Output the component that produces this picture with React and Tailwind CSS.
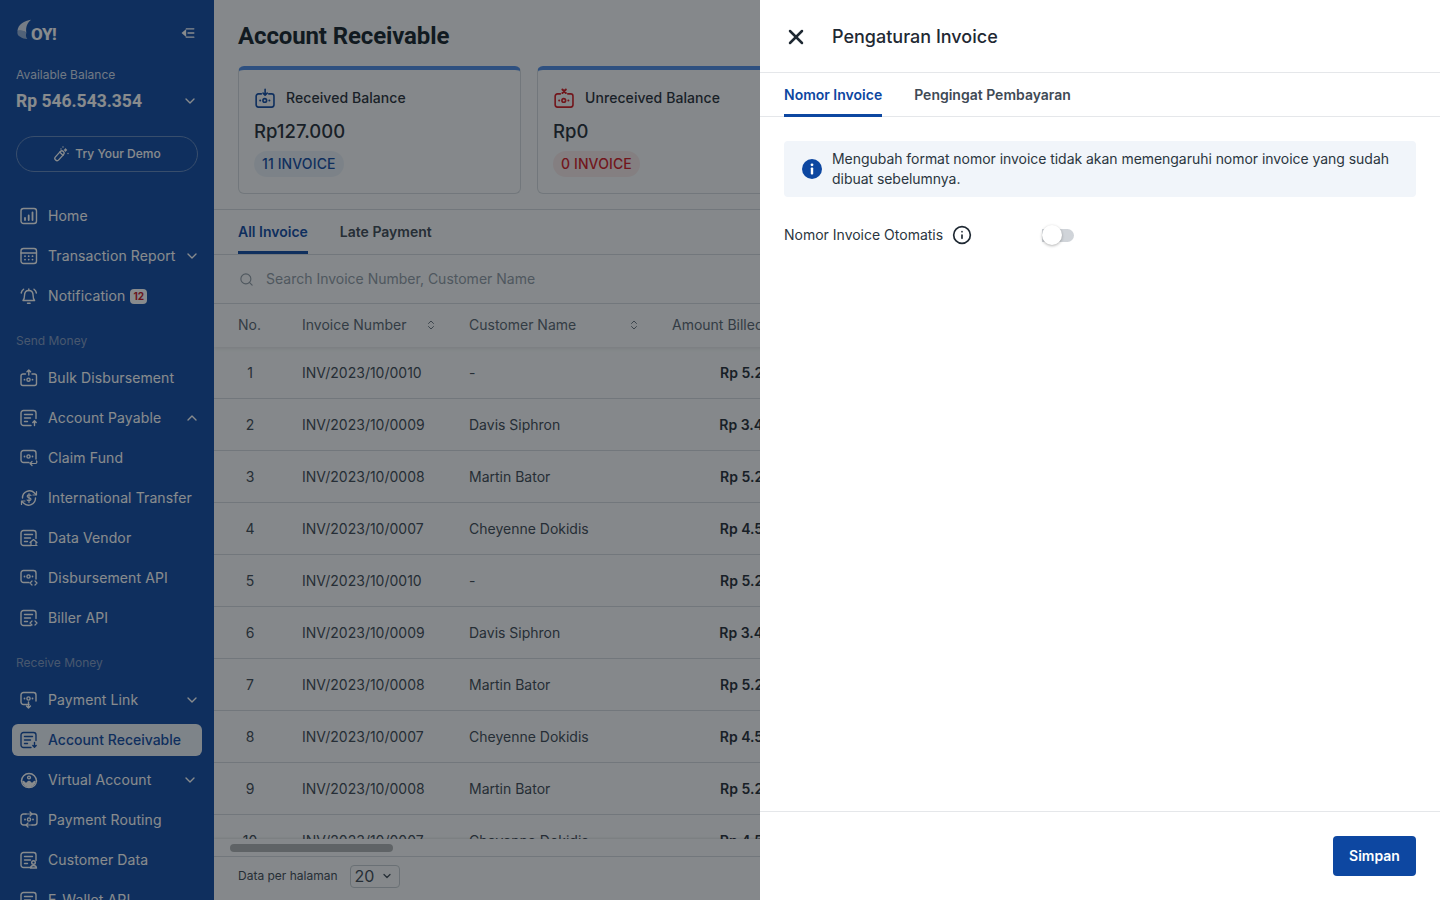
import { ChevronDown, ChevronUp, ChevronsUpDown, Info, Search, X } from 'lucide-react'

const font = { fontFamily: 'Inter, "Noto Sans", sans-serif' }

function Svg({ children, className = 'h-5 w-5 shrink-0' }) {
  return (
    <svg viewBox="0 0 20 20" fill="none" stroke="currentColor" strokeWidth="1.4" strokeLinecap="round" strokeLinejoin="round" className={className}>
      {children}
    </svg>
  )
}

function Dots() {
  return (
    <>
      <circle cx="8.5" cy="8.5" r="1.6" />
      <path d="M4.5 8.5h.01M12.5 8.5h.01" strokeWidth="1.8" />
    </>
  )
}

const HomeIcon = () => (
  <Svg>
    <rect x="1" y="2.5" width="15.5" height="15" rx="2.5" />
    <path d="M5 14v-2M8.7 14V9.5M12.5 14V6.5" strokeWidth="1.8" />
  </Svg>
)
const ReportIcon = () => (
  <Svg>
    <rect x="1" y="2.5" width="15.5" height="15" rx="2.5" />
    <path d="M1 7h15.5" />
    <path d="M5 10.2h.01M8.7 10.2h.01M12.5 10.2h.01M5 13.6h.01M8.7 13.6h.01M12.5 13.6h.01" strokeWidth="1.8" />
  </Svg>
)
const BellIcon = () => (
  <Svg>
    <path d="M3 14.500c1-1 1.500-2.500 1.500-5 0-3 1.700-5 4.300-5s4.300 2 4.300 5c0 2.500.5 4 1.500 5z" />
    <path d="M7.500 17.300h2.600M8.800 4.500V3M1.200 7C1.500 5.500 2.300 4.300 3.600 3.300M16.400 7c-.3-1.500-1.100-2.700-2.400-3.700" />
  </Svg>
)
const BoxIcon = ({ top, className }) => (
  <Svg className={className}>
    <path d="M5.500 6H3a2 2 0 0 0-2 2v7.500a2 2 0 0 0 2 2h11.500a2 2 0 0 0 2-2V8a2 2 0 0 0-2-2H12" />
    <g transform="translate(0 3.200)">
      <Dots />
    </g>
    {top === 'up' && <path d="M8.800 7V2M7 3.700l1.800-1.700 1.800 1.700" />}
    {top === 'down' && <path d="M8.800 2v5M7 5.300 8.800 7l1.800-1.700" />}
    {top === 'x' && <path d="M7.300 2.200l3 3M10.300 2.200l-3 3" strokeWidth="1.700" />}
  </Svg>
)
const DocIcon = ({ children }) => (
  <Svg>
    <path d="M11 17.500H3.500a2.500 2.500 0 0 1-2.500-2.500V5a2.500 2.500 0 0 1 2.500-2.500h10A2.500 2.500 0 0 1 16 5v5.500" />
    <path d="M4.500 6.500h8M4.500 10h6M4.500 13.500h3" />
    {children}
  </Svg>
)
const ScreenIcon = ({ children }) => (
  <Svg>
    <path d="M9 14.500H3.500A2.500 2.500 0 0 1 1 12V5a2.500 2.500 0 0 1 2.500-2.500h10A2.500 2.500 0 0 1 16 5v6" />
    <Dots />
    {children}
  </Svg>
)
const GlobeIcon = () => (
  <Svg>
    <path d="M2.500 10a7 7 0 0 1 12-5l1.500 1.500M15.500 10a7 7 0 0 1-12 5L2 13.500" />
    <path d="M16.500 3.500v3.500H13M1.500 16.500V13H5" strokeWidth="1.200" />
    <path d="M11 7.500c-.5-.8-3.800-1-3.800.8 0 1.900 3.800 1 3.800 3 0 1.700-3.300 1.600-3.900.7M9 5.500v9" strokeWidth="1.200" />
  </Svg>
)
const VaIcon = () => (
  <Svg>
    <path d="M1.500 11a7.500 7.500 0 0 1 15 0" />
    <path d="M1.500 11c.5 4 3.500 6.500 7.500 6.500s7-2.500 7.500-6.500" />
    <path d="M3 11.500c1.500 0 1.500 2 3 2s1.500-2 3-2 1.500 2 3 2 1.500-2 3-2c-.5 3-3 5-6 5s-5.500-2-6-5z" fill="currentColor" />
    <circle cx="9" cy="7.500" r="1.400" />
  </Svg>
)
const RoutingIcon = () => (
  <Svg>
    <path d="M6 4H3.500A2.500 2.500 0 0 0 1 6.500v6A2.500 2.500 0 0 0 3.500 15H6M12 4h2.500A2.500 2.500 0 0 1 17 6.500v6a2.500 2.500 0 0 1-2.500 2.500H12" />
    <path d="M6 4h5.500M10 2l2 2-2 2M12 15H6.500M8 13l-2 2 2 2" strokeWidth="1.200" />
    <g transform="translate(.5 1)">
      <Dots />
    </g>
  </Svg>
)
const CustomerIcon = () => (
  <DocIcon>
    <circle cx="13.500" cy="12.500" r="1.800" />
    <path d="M10.500 18c.2-1.700 1.400-2.500 3-2.500s2.800.8 3 2.500z" />
  </DocIcon>
)
const WandIcon = () => (
  <svg viewBox="0 0 16 16" fill="none" stroke="currentColor" strokeWidth="1.300" strokeLinecap="round" strokeLinejoin="round" className="h-4 w-4 shrink-0">
    <rect x="4.300" y="4" width="4.400" height="11.500" rx="2.200" transform="rotate(42 6.500 9.700)" />
    <path d="M6.600 6.100 10 9.200" />
    <path d="M10 1v.01M12.500 3v2M11.500 4h2M15 7.500h.01M8 3h.01" strokeWidth="1.400" />
  </svg>
)

function OyLogo() {
  return (
    <div className="flex items-end">
      <svg viewBox="0 0 16 21" className="h-[21px] w-[15px] shrink-0">
        <path d="M15 0C8 1 1 5 .5 12 4 11 8 12 10 14 9 8 11 3 15 0z" fill="#ffffff" fillOpacity="0.85" />
        <path d="M.5 12C0 15 1 17 3 18c3 2 5 2.500 8 2.500-2-2.500-1.500-4.500-1-6.500C8 12 4 11 .5 12z" fill="#ffffff" fillOpacity="0.55" />
      </svg>
      <span className="-mb-[3px] -ml-px text-[17px] leading-[17px] font-extrabold tracking-tight text-white" style={{ fontFamily: 'Roboto, sans-serif' }}>OY!</span>
    </div>
  )
}

const sendMoney = [
  { label: 'Bulk Disbursement', icon: <BoxIcon top="up" /> },
  {
    label: 'Account Payable',
    chevron: 'up',
    icon: (
      <DocIcon>
        <path d="M14.500 17.500V13M12.800 14.500l1.700-1.700 1.700 1.700" />
      </DocIcon>
    ),
  },
  {
    label: 'Claim Fund',
    icon: (
      <ScreenIcon>
        <path d="M10 15.500h5.500a1.500 1.500 0 0 0 1-2.500M12 13.500l-2 2 2 2" strokeWidth="1.200" />
      </ScreenIcon>
    ),
  },
  { label: 'International Transfer', icon: <GlobeIcon /> },
  {
    label: 'Data Vendor',
    icon: (
      <DocIcon>
        <path d="M10 14.500 13.500 11.500 17 14.500M11 14v3.500h5V14M10 17.500h7" strokeWidth="1.200" />
      </DocIcon>
    ),
  },
  {
    label: 'Disbursement API',
    icon: (
      <ScreenIcon>
        <path d="M12 13l-2 2 2 2M15 13l2 2-2 2" strokeWidth="1.200" />
      </ScreenIcon>
    ),
  },
  {
    label: 'Biller API',
    icon: (
      <DocIcon>
        <path d="M12 13l-2 2 2 2M15 13l2 2-2 2" strokeWidth="1.200" />
      </DocIcon>
    ),
  },
]

const receiveMoney = [
  {
    label: 'Payment Link',
    chevron: 'down',
    icon: (
      <ScreenIcon>
        <path d="M8.500 12v6M6.500 16l2 2 2-2" />
      </ScreenIcon>
    ),
  },
  {
    label: 'Account Receivable',
    active: true,
    icon: (
      <DocIcon>
        <path d="M14.500 12.500V17M12.800 15.500l1.700 1.700 1.700-1.700" />
      </DocIcon>
    ),
  },
  { label: 'Virtual Account', chevron: 'down', tight: true, icon: <VaIcon /> },
  { label: 'Payment Routing', icon: <RoutingIcon /> },
  { label: 'Customer Data', icon: <CustomerIcon /> },
  {
    label: 'E-Wallet API',
    icon: (
      <DocIcon>
        <path d="M12 13l-2 2 2 2" strokeWidth="1.200" />
      </DocIcon>
    ),
  },
]

function NavRow({ item }) {
  const { label, icon, chevron, active, tight, badge } = item
  return (
    <div className={`flex h-8 shrink-0 items-center rounded-md pl-2 text-sm ${tight ? 'pr-1' : 'pr-0.5'} ${active ? 'bg-[#ebf0f6] font-medium text-[#0d47a1]' : 'text-white'}`}>
      {icon}
      <span className={`ml-2 whitespace-nowrap ${active ? '' : 'tracking-[0.008em]'}`}>{label}</span>
      {badge && <span className="ml-[5px] rounded-[4px] bg-white px-[3px] text-[10px] leading-[15px] font-bold text-[#c2101a]">{badge}</span>}
      {chevron === 'down' && <ChevronDown className="ml-auto h-4 w-4 shrink-0" strokeWidth={2} />}
      {chevron === 'up' && <ChevronUp className="ml-auto h-4 w-4 shrink-0" strokeWidth={2} />}
    </div>
  )
}

function NavSection({ title, items }) {
  return (
    <>
      <div className="mt-[21px] shrink-0 px-4 text-xs leading-4 text-[#7f97c0]">{title}</div>
      <div className="mt-[13px] flex shrink-0 flex-col gap-2 px-3">
        {items.map((item) => (
          <NavRow key={item.label} item={item} />
        ))}
      </div>
    </>
  )
}

function Sidebar() {
  return (
    <aside className="flex h-screen w-[214px] shrink-0 flex-col overflow-hidden bg-[#0d47a1]">
      <div className="flex h-[67px] shrink-0 items-start justify-between pt-[19px] pr-[19px] pl-[17px]">
        <OyLogo />
        <svg viewBox="0 0 16 12" fill="none" stroke="#ffffff" strokeWidth="1.600" strokeLinecap="round" className="mt-[9px] h-[10px] w-[14px]">
          <path d="M6 1h9M8 6h7M6 11h9M5 3 1.500 6 5 9z" fill="#ffffff" />
        </svg>
      </div>
      <div className="shrink-0 px-4 text-xs leading-4 text-[#cfdaea]">Available Balance</div>
      <div className="mt-1 flex h-7 shrink-0 items-center justify-between px-4 text-white">
        <span className="text-[17.5px] font-bold" style={{ fontFamily: 'Roboto, sans-serif' }}>Rp 546.543.354</span>
        <ChevronDown className="h-4 w-4" strokeWidth={2} />
      </div>
      <div className="mx-4 mt-[21px] flex h-9 shrink-0 items-center justify-center gap-1.5 rounded-full border border-[#5f84bd] text-xs font-medium text-white">
        <WandIcon />
        Try Your Demo
      </div>
      <div className="mt-7 flex shrink-0 flex-col gap-2 px-3">
        <NavRow item={{ label: 'Home', icon: <HomeIcon /> }} />
        <NavRow item={{ label: 'Transaction Report', chevron: 'down', icon: <ReportIcon /> }} />
        <NavRow item={{ label: 'Notification', badge: '12', icon: <BellIcon /> }} />
      </div>
      <NavSection title="Send Money" items={sendMoney} />
      <NavSection title="Receive Money" items={receiveMoney} />
    </aside>
  )
}

function BalanceCard({ title, value, count, tone }) {
  const blue = tone === 'blue'
  return (
    <div className="flex h-32 w-[283px] shrink-0 flex-col rounded-md border border-[#d3d7dc] border-t-4 border-t-[#4b88e4] px-[15px] pt-[18px]">
      <div className="flex h-5 items-center gap-2">
        <span className={`ml-px ${blue ? 'text-[#0d47a1]' : 'text-[#d2141c]'}`}>
          <BoxIcon top={blue ? 'down' : 'x'} className="h-[23px] w-[23px]" />
        </span>
        <span className="text-sm font-medium tracking-[0.005em] text-[#1f2933]">{title}</span>
      </div>
      <div className="mt-[9px] text-[18.5px] leading-7 font-medium text-[#1f2933]">{value}</div>
      <div className={`mt-1.5 flex h-[26px] w-fit items-center rounded-full px-2 text-sm font-medium tracking-[0.008em] ${blue ? 'bg-[#e7edf5] text-[#0d47a1]' : 'bg-[#f6e6e7] text-[#d2141c]'}`}>
        {count}
      </div>
    </div>
  )
}

const rows = [
  ['1', 'INV/2023/10/0010', '-', 'Rp 5.200.000'],
  ['2', 'INV/2023/10/0009', 'Davis Siphron', 'Rp 3.400.000'],
  ['3', 'INV/2023/10/0008', 'Martin Bator', 'Rp 5.200.000'],
  ['4', 'INV/2023/10/0007', 'Cheyenne Dokidis', 'Rp 4.500.000'],
  ['5', 'INV/2023/10/0010', '-', 'Rp 5.200.000'],
  ['6', 'INV/2023/10/0009', 'Davis Siphron', 'Rp 3.400.000'],
  ['7', 'INV/2023/10/0008', 'Martin Bator', 'Rp 5.200.000'],
  ['8', 'INV/2023/10/0007', 'Cheyenne Dokidis', 'Rp 4.500.000'],
  ['9', 'INV/2023/10/0008', 'Martin Bator', 'Rp 5.200.000'],
  ['10', 'INV/2023/10/0007', 'Cheyenne Dokidis', 'Rp 4.500.000'],
]

function InvoiceTable() {
  return (
    <div className="min-h-0 flex-1 overflow-hidden">
      <div className="flex h-[43px] items-center pb-0.5 pl-6 text-sm text-[#55616d] shadow-[0_2px_3px_rgba(0,0,0,0.08)]">
        <span className="w-16 shrink-0">No.</span>
        <span className="flex w-[135px] shrink-0 items-center justify-between">
          Invoice Number
          <ChevronsUpDown className="h-3 w-3" strokeWidth={1.8} />
        </span>
        <span className="ml-8 flex w-[171px] shrink-0 items-center justify-between">
          Customer Name
          <ChevronsUpDown className="h-3 w-3" strokeWidth={1.8} />
        </span>
        <span className="ml-8 shrink-0 whitespace-nowrap">Amount Billed</span>
      </div>
      {rows.map(([no, invoice, customer, amount]) => (
        <div key={no + invoice} className="flex h-[52px] items-center border-b border-[#d3d7dc] pl-6 text-sm text-[#3a4550]">
          <span className="w-16 shrink-0 pr-10 text-center">{no}</span>
          <span className="w-[167px] shrink-0">{invoice}</span>
          <span className="w-[203px] shrink-0">{customer}</span>
          <span className="w-[141px] shrink-0 text-right font-semibold text-[#1f2933]">{amount}</span>
        </div>
      ))}
    </div>
  )
}

function MainPanel() {
  return (
    <main className="flex h-screen min-w-0 flex-1 flex-col overflow-hidden bg-[#f8f9fa]">
      <h1 className="flex h-[66px] shrink-0 items-center pt-1.5 pl-6 text-2xl font-bold tracking-[-0.005em] text-[#111c26]" style={{ fontFamily: 'Roboto, sans-serif' }}>
        Account Receivable
      </h1>
      <div className="flex h-[144px] shrink-0 gap-4 border-b border-[#d3d7dc] pl-6">
        <BalanceCard title="Received Balance" value="Rp127.000" count="11 INVOICE" tone="blue" />
        <BalanceCard title="Unreceived Balance" value="Rp0" count="0 INVOICE" tone="red" />
        <BalanceCard title="Overdue Balance" value="Rp0" count="0 INVOICE" tone="red" />
      </div>
      <div className="flex h-[45px] shrink-0 gap-8 border-b border-[#d3d7dc] pl-6 text-sm font-semibold">
        <div className="flex h-full items-center border-b-[3px] border-[#0d47a1] pt-[3px] text-[#0d47a1]">All Invoice</div>
        <div className="flex h-full items-center text-[#3a4550]">Late Payment</div>
      </div>
      <div className="flex h-[49px] shrink-0 items-center gap-3 border-b border-[#d3d7dc] pl-[25px] text-sm text-[#8d97a2]">
        <Search className="h-[15px] w-[15px]" strokeWidth={1.8} />
        Search Invoice Number, Customer Name
      </div>
      <InvoiceTable />
      <div className="flex h-[17px] shrink-0 items-center pl-4 shadow-[0_-1px_2px_rgba(0,0,0,0.1)]">
        <div className="h-2 w-[163px] rounded-full bg-[#acafb1]" />
      </div>
      <div className="flex h-11 shrink-0 items-center gap-3 border-t border-[#d3d7dc] pb-[5px] pl-6 text-xs text-[#3a4550]">
        Data per halaman
        <div className="flex h-[23px] w-[50px] items-center justify-between rounded border border-[#c3c8ce] pr-1.5 pl-1 text-base text-[#3a4550]">
          20
          <ChevronDown className="h-3 w-3" strokeWidth={2.5} />
        </div>
      </div>
    </main>
  )
}

function InvoiceDrawer() {
  return (
    <section className="absolute inset-y-0 right-0 flex w-[680px] flex-col bg-white">
      <div className="flex h-[73px] shrink-0 items-center gap-6 border-b border-[#e5e7ea] pt-0.5 pl-6">
        <X className="h-6 w-6 text-[#1f2933]" strokeWidth={2.5} />
        <h2 className="text-lg font-medium text-[#1f2933]">Pengaturan Invoice</h2>
      </div>
      <div className="flex h-11 shrink-0 gap-8 border-b border-[#e5e7ea] pl-6 text-sm font-semibold">
        <div className="flex h-[44px] items-center border-b-[3px] border-[#0d47a1] pt-0.5 text-[#0d47a1]">Nomor Invoice</div>
        <div className="flex h-[44px] items-center text-[#3f4a55]">Pengingat Pembayaran</div>
      </div>
      <div className="flex-1 px-6 pt-6">
        <div className="flex h-14 items-center gap-2.5 rounded bg-[#f1f5fa] pr-4 pl-[18px] text-sm leading-5 tracking-[-0.003em] text-[#2b3640]">
          <svg viewBox="0 0 20 20" className="h-5 w-5 shrink-0">
            <circle cx="10" cy="10" r="10" fill="#0d47a1" />
            <rect x="8.800" y="8.500" width="2.400" height="7" rx="0.800" fill="#ffffff" />
            <circle cx="10" cy="5.800" r="1.400" fill="#ffffff" />
          </svg>
          <p>Mengubah format nomor invoice tidak akan memengaruhi nomor invoice yang sudah dibuat sebelumnya.</p>
        </div>
        <div className="mt-7 flex h-5 items-center text-sm text-[#2b3640]">
          <span className="w-[168px] shrink-0">Nomor Invoice Otomatis</span>
          <Info className="h-5 w-5 text-[#1f2933]" strokeWidth={2} />
          <div className="ml-[70px] flex h-5 w-8 shrink-0 items-center">
            <div className="relative h-[13px] w-full rounded-r-full bg-[#d0d4d9]">
              <span className="absolute top-1/2 left-0 h-5 w-5 -translate-y-1/2 rounded-full bg-white shadow-[0_1px_3px_rgba(0,0,0,0.3)]" />
            </div>
          </div>
        </div>
      </div>
      <div className="flex h-[89px] shrink-0 items-start justify-end border-t border-[#e5e7ea] pt-6 pr-6">
        <button className="h-10 w-[83px] rounded bg-[#0d47a1] text-sm font-semibold text-white">Simpan</button>
      </div>
    </section>
  )
}

export default function App() {
  return (
    <div className="relative flex h-screen w-full overflow-hidden" style={font}>
      <Sidebar />
      <MainPanel />
      <div className="absolute inset-0 bg-[#11181c]/50" />
      <InvoiceDrawer />
    </div>
  )
}
